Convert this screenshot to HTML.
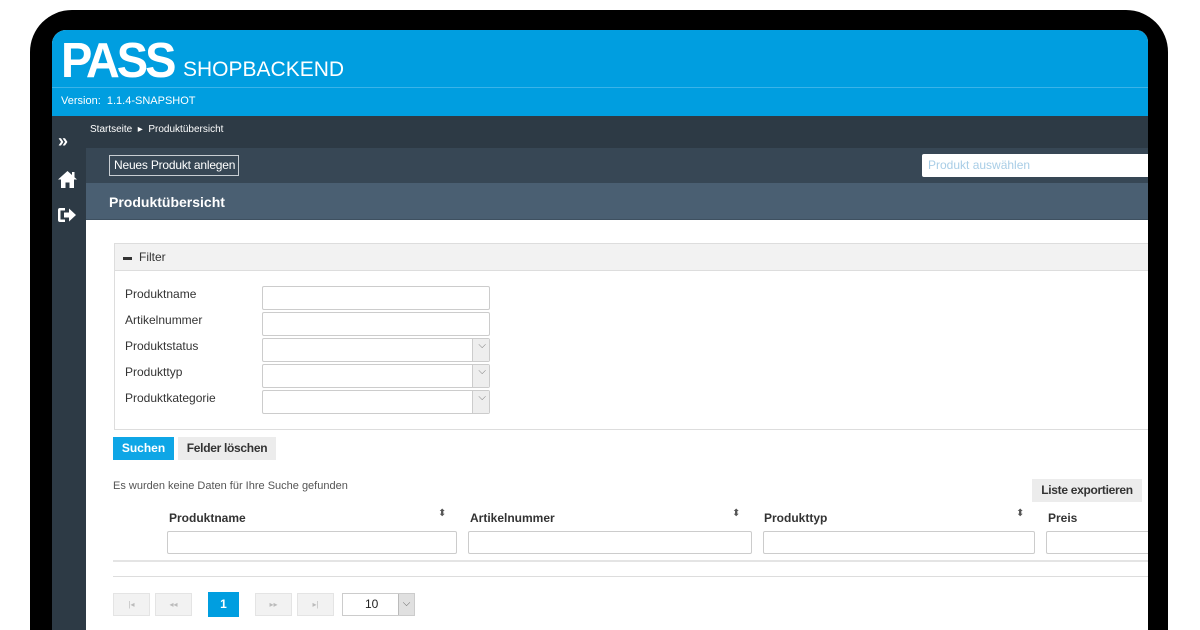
<!DOCTYPE html>
<html><head><meta charset="utf-8"><style>
*{box-sizing:border-box;margin:0;padding:0}
html,body{width:1200px;height:630px;overflow:hidden}
body{background:#fff;font-family:"Liberation Sans",sans-serif;position:relative}
.a{position:absolute}
.frame{left:30px;top:10px;width:1138px;height:620px;background:#000;border-radius:42px 42px 0 0}
.screen{left:52px;top:30px;width:1096px;height:600px;background:#fff;border-radius:14px 12px 0 0;overflow:hidden}
.inp{position:absolute;background:#fff;border:1px solid #ccc;border-radius:2px}
.lbl{position:absolute;font-size:12px;color:#333;left:73px}
.sel::after{content:"";position:absolute;right:0;top:0;width:16px;height:100%;background:#eee;border-left:1px solid #ccc}
.sel::before{content:"⌵";position:absolute;right:3px;top:1px;font-size:10px;color:#777;z-index:1}
.th{position:absolute;top:481px;font-size:12px;font-weight:bold;color:#333}
.srt{position:absolute;top:478px;font-size:10px;color:#555}
.pg{position:absolute;top:563px;height:23px;background:#f2f2f2;border:1px solid #e4e4e4;font-size:8px;color:#bbb;text-align:center;line-height:21px}
</style></head><body>
<div class="a frame"></div>
<div class="a screen">
 <div class="a" style="left:0;top:0;width:1096px;height:57px;background:#009ee0"></div>
 <div class="a" style="left:9px;top:5px;font-size:47px;font-weight:900;color:#fff;letter-spacing:-3px;line-height:47px;transform:scaleY(1.05);transform-origin:top">PASS</div>
 <div class="a" style="left:131px;top:28px;font-size:21px;color:#fff">SHOPBACKEND</div>
 <div class="a" style="left:0;top:57px;width:1096px;height:29px;background:#009ee0;border-top:1px solid #3bb3e8"></div>
 <div class="a" style="left:9px;top:65px;font-size:11px;color:#fff">Version:&nbsp;&nbsp;1.1.4-SNAPSHOT</div>
 <div class="a" style="left:0;top:86px;width:1096px;height:34px;background:#2d3a45"></div>
 <div class="a" style="left:0;top:86px;width:34px;height:540px;background:#2d3a45"></div>
 <div class="a" style="left:38px;top:94px;font-size:10px;color:#fff">Startseite&nbsp;&nbsp;▸&nbsp;&nbsp;Produktübersicht</div>
 <div class="a" style="left:6px;top:101px;font-size:18px;font-weight:bold;color:#fff;letter-spacing:-4px">»</div>
 <svg class="a" style="left:5px;top:140px" width="21" height="19" viewBox="0 0 21 19"><path d="M10.5 1 L1 9.5 H4 V18 H8.5 V12.5 H12.5 V18 H17 V9.5 H20 Z" fill="#fff"/><rect x="15" y="2" width="2.5" height="5" fill="#fff"/></svg>
 <svg class="a" style="left:5px;top:176px" width="20" height="18" viewBox="0 0 20 18"><path d="M8 2 H3 Q1 2 1 4 V14 Q1 16 3 16 H8 V13.5 H3.5 V4.5 H8 Z" fill="#fff"/><path d="M7 6.5 H12 V2.5 L19 9 L12 15.5 V11.5 H7 Z" fill="#fff"/></svg>
 <div class="a" style="left:34px;top:118px;width:1062px;height:35px;background:#374755"></div>
 <div class="a" style="left:57px;top:125px;width:130px;height:21px;border:1px solid #c8ced3;color:#fff;font-size:12px;line-height:19px;padding-left:4px;white-space:nowrap;overflow:hidden;letter-spacing:-0.2px">Neues Produkt anlegen</div>
 <div class="a" style="left:870px;top:124px;width:230px;height:23px;background:#fff;border-radius:2px;font-size:12px;color:#a8cde6;line-height:23px;padding-left:6px">Produkt auswählen</div>
 <div class="a" style="left:34px;top:153px;width:1062px;height:37px;background:#4a5f72;border-bottom:1px solid #3e5060"></div>
 <div class="a" style="left:57px;top:164px;font-size:14px;font-weight:bold;color:#fff">Produktübersicht</div>
 <div class="a" style="left:62px;top:213px;width:1040px;height:187px;border:1px solid #ddd"></div>
 <div class="a" style="left:63px;top:214px;width:1040px;height:27px;background:#f2f2f2;border-bottom:1px solid #ddd"></div>
 <div class="a" style="left:71px;top:227px;width:9px;height:3px;background:#333"></div>
 <div class="a" style="left:87px;top:220px;font-size:12px;color:#333">Filter</div>
 <div class="lbl" style="top:257px">Produktname</div>
 <div class="lbl" style="top:283px">Artikelnummer</div>
 <div class="lbl" style="top:309px">Produktstatus</div>
 <div class="lbl" style="top:335px">Produkttyp</div>
 <div class="lbl" style="top:361px">Produktkategorie</div>
 <div class="inp" style="left:210px;top:256px;width:228px;height:24px"></div>
 <div class="inp" style="left:210px;top:282px;width:228px;height:24px"></div>
 <div class="inp sel" style="left:210px;top:308px;width:228px;height:24px"></div>
 <div class="inp sel" style="left:210px;top:334px;width:228px;height:24px"></div>
 <div class="inp sel" style="left:210px;top:360px;width:228px;height:24px"></div>
 <div class="a" style="left:61px;top:407px;width:61px;height:23px;background:#0ea6e6;color:#fff;font-size:12px;font-weight:bold;text-align:center;line-height:23px">Suchen</div>
 <div class="a" style="left:126px;top:407px;width:98px;height:23px;background:#ececec;color:#333;font-size:12px;font-weight:bold;text-align:center;line-height:23px;letter-spacing:-0.3px">Felder löschen</div>
 <div class="a" style="left:61px;top:450px;font-size:11px;color:#555">Es wurden keine Daten für Ihre Suche gefunden</div>
 <div class="a" style="left:980px;top:449px;width:110px;height:23px;background:#ececec;color:#333;font-size:12px;font-weight:bold;text-align:center;line-height:23px;letter-spacing:-0.3px">Liste exportieren</div>
 <div class="th" style="left:117px">Produktname</div><div class="srt" style="left:386px">⬍</div>
 <div class="th" style="left:418px">Artikelnummer</div><div class="srt" style="left:680px">⬍</div>
 <div class="th" style="left:712px">Produkttyp</div><div class="srt" style="left:964px">⬍</div>
 <div class="th" style="left:996px">Preis</div>
 <div class="inp" style="left:115px;top:501px;width:290px;height:23px"></div>
 <div class="inp" style="left:416px;top:501px;width:284px;height:23px"></div>
 <div class="inp" style="left:711px;top:501px;width:272px;height:23px"></div>
 <div class="inp" style="left:994px;top:501px;width:110px;height:23px"></div>
 <div class="a" style="left:61px;top:530px;width:1040px;height:2px;background:#e4e4e4"></div>
 <div class="a" style="left:61px;top:546px;width:1040px;height:1px;background:#ddd"></div>
 <div class="pg" style="left:61px;width:37px">|◂</div>
 <div class="pg" style="left:103px;width:37px">◂◂</div>
 <div class="a" style="left:156px;top:562px;width:31px;height:25px;background:#009ee0;color:#fff;font-size:12px;font-weight:bold;text-align:center;line-height:25px">1</div>
 <div class="pg" style="left:203px;width:37px">▸▸</div>
 <div class="pg" style="left:245px;width:37px">▸|</div>
 <div class="inp" style="left:290px;top:563px;width:73px;height:23px;border-radius:0;font-size:12px;color:#222;line-height:21px;padding-left:22px">10</div>
 <div class="a" style="left:346px;top:564px;width:16px;height:21px;background:#e0e0e0;border-left:1px solid #bbb;font-size:10px;color:#666;text-align:center;line-height:19px">⌵</div>
</div>
</body></html>
